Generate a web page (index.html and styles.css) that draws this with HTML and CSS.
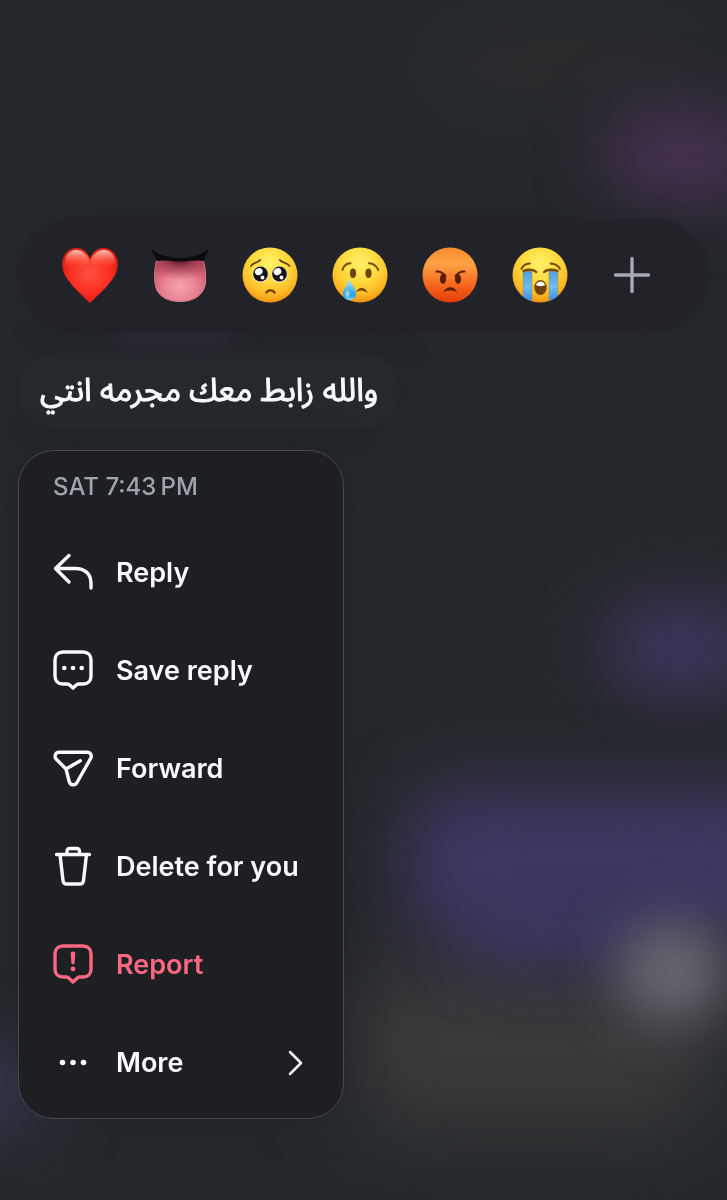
FILE: index.html
```html
<!DOCTYPE html>
<html lang="en">
<head>
<meta charset="UTF-8">
<meta name="viewport" content="width=device-width, initial-scale=1.0">
<title>Message options</title>
<link rel="stylesheet" href="styles.css">
</head>
<body>

<svg class="defs" width="0" height="0" aria-hidden="true">
  <defs>
    <radialGradient id="face" cx="50%" cy="30%" r="72%">
      <stop offset="0" stop-color="#fff26a"/>
      <stop offset="0.45" stop-color="#ffdb3e"/>
      <stop offset="0.8" stop-color="#fdb524"/>
      <stop offset="1" stop-color="#ea8c0e"/>
    </radialGradient>
    <linearGradient id="angry" x1="0" y1="0" x2="0" y2="1">
      <stop offset="0" stop-color="#f98a2c"/>
      <stop offset="0.3" stop-color="#fda245"/>
      <stop offset="0.65" stop-color="#f66c20"/>
      <stop offset="1" stop-color="#e43c08"/>
    </linearGradient>
    <radialGradient id="heart" cx="50%" cy="45%" r="60%">
      <stop offset="0" stop-color="#ff5340"/>
      <stop offset="0.6" stop-color="#fb2f22"/>
      <stop offset="1" stop-color="#d8150f"/>
    </radialGradient>
    <linearGradient id="shine" x1="0" y1="0" x2="0" y2="1">
      <stop offset="0" stop-color="#ffc4b4"/>
      <stop offset="1" stop-color="#ff5a45" stop-opacity="0"/>
    </linearGradient>
    <radialGradient id="tongue" cx="50%" cy="66%" r="62%">
      <stop offset="0" stop-color="#f5a3b0"/>
      <stop offset="0.5" stop-color="#ea8597"/>
      <stop offset="0.85" stop-color="#d86278"/>
      <stop offset="1" stop-color="#c4586c"/>
    </radialGradient>
    <radialGradient id="tongueShade" cx="50%" cy="0%" r="75%" fx="50%" fy="0%">
      <stop offset="0" stop-color="#571626"/>
      <stop offset="0.45" stop-color="#8a2c42" stop-opacity="0.6"/>
      <stop offset="1" stop-color="#a33a50" stop-opacity="0"/>
    </radialGradient>
    <linearGradient id="drop" x1="0" y1="0" x2="0" y2="1">
      <stop offset="0" stop-color="#bfeaff"/>
      <stop offset="0.5" stop-color="#4fb9ee"/>
      <stop offset="0.8" stop-color="#2aa0e6"/>
      <stop offset="1" stop-color="#7fdcff"/>
    </linearGradient>
    <linearGradient id="stream" x1="0" y1="0" x2="0" y2="1">
      <stop offset="0" stop-color="#4a9fe0"/>
      <stop offset="0.5" stop-color="#6fbdf2"/>
      <stop offset="1" stop-color="#2387e8"/>
    </linearGradient>
    <clipPath id="faceClip"><circle cx="30" cy="30" r="27.5"/></clipPath>
  </defs>
</svg>

<div class="backdrop" aria-hidden="true">
  <div class="blob haze"></div>
  <div class="blob plum"></div>
  <div class="blob violet"></div>
  <div class="blob ash"></div>
  <div class="blob indigo"></div>
  <div class="blob indigo-low"></div>
  <div class="blob light"></div>
  <div class="blob slate"></div>
  <div class="blob trace"></div>
</div>

<main class="overlay">
  <div class="reactions">
    <button type="button" aria-label="Heart">
      <svg class="emoji" viewBox="0 0 60 60">
        <path fill="url(#heart)" d="M30 58.500C27 54 6 38 3 25C0 12 7 3 16.500 3C23 3 28 8 30 14C32 8 37 3 43.500 3C53 3 60 12 57 25C54 38 33 54 30 58.500z"/>
        <path fill="url(#shine)" d="M5 20C4 10 10 5 16.500 5C22 5 27 9 29.500 17C24 22 12 25 5 20z"/>
        <path fill="url(#shine)" d="M55 20C56 10 50 5 43.500 5C38 5 33 9 30.500 17C36 22 48 25 55 20z"/>
      </svg>
    </button>
    <button type="button" aria-label="Tongue">
      <svg class="emoji" viewBox="0 0 60 60">
        <path fill="url(#tongue)" stroke="#d9808e" stroke-width="1" d="M7 14C5 21 4 29 5 38C6 50 16 56.500 30 56.500S54 50 55.500 38C56 29 55 21 53 14z"/>
        <path fill="url(#tongueShade)" d="M7 14C6 18 5 23 5 28L30 42L55 28C55 23 54 18 53 14z"/>
        <path fill="#0d0b0d" d="M1 3.500C9 10.500 19 13 30 13S51 10.500 59 3.500C58 8 55 11 54 16C46 14.500 38 16.500 30 16.500S14 14.500 6.500 16C5.500 11 2 8 1 3.500z"/>
      </svg>
    </button>
    <button type="button" aria-label="Pleading face">
      <svg class="emoji" viewBox="0 0 60 60">
        <circle cx="30" cy="30" r="27.500" fill="url(#face)"/>
        <circle cx="20.500" cy="29.500" r="8.200" fill="#f4e6c8"/>
        <circle cx="39.500" cy="29.500" r="8.200" fill="#f4e6c8"/>
        <circle cx="20.500" cy="29" r="7.400" fill="#17141a"/>
        <circle cx="39.500" cy="29" r="7.400" fill="#17141a"/>
        <g fill="#fff">
          <ellipse cx="18.800" cy="26.600" rx="4" ry="3.400" transform="rotate(-25 18.800 26.600)"/>
          <ellipse cx="37.500" cy="26.600" rx="4" ry="3.400" transform="rotate(-25 37.500 26.600)"/>
          <circle cx="22.500" cy="32.500" r="1.900"/>
          <circle cx="41.500" cy="32.500" r="1.900"/>
        </g>
        <g fill="none" stroke="#6e3f08" stroke-width="1.700" stroke-linecap="round">
          <path d="M11 21C13 17.500 16.500 18.500 20.300 15"/>
          <path d="M39.700 15C43.500 18.500 47 17.500 49.500 21"/>
          <path stroke-width="2.400" d="M26.500 47.500C28 44.700 33 44.700 34.500 47.500"/>
        </g>
      </svg>
    </button>
    <button type="button" aria-label="Crying face">
      <svg class="emoji" viewBox="0 0 60 60">
        <circle cx="30" cy="30" r="27.500" fill="url(#face)"/>
        <ellipse cx="23" cy="28.300" rx="3.100" ry="4.700" fill="#70430c"/>
        <ellipse cx="38.500" cy="28.300" rx="3.100" ry="4.700" fill="#70430c"/>
        <g fill="none" stroke="#7d4b0c" stroke-width="1.900" stroke-linecap="round">
          <path d="M12.500 25C13.500 21 16.500 18.500 20.500 18.300"/>
          <path d="M39 18.300C43 18.500 46.500 21 48.300 25"/>
        </g>
        <path fill="#70430c" d="M25.500 47.500C28 41.500 35.500 41 37.700 48.200C34 44.800 29.500 44.500 25.500 47.500z"/>
        <path fill="url(#drop)" d="M19.300 34C17.500 40 13 44 13 48.700C13 52.500 16 55 19.500 55S26 52.500 26 48.700C26 44 21.500 40 19.300 34z"/>
        <ellipse cx="17.500" cy="49" rx="2" ry="3" fill="#c9f1ff" opacity="0.600"/>
      </svg>
    </button>
    <button type="button" aria-label="Angry face">
      <svg class="emoji" viewBox="0 0 60 60">
        <circle cx="30" cy="30" r="27.500" fill="url(#angry)"/>
        <ellipse cx="23" cy="34" rx="3" ry="4.700" fill="#5a1c05"/>
        <ellipse cx="38" cy="34" rx="3" ry="4.700" fill="#5a1c05"/>
        <g fill="none" stroke="#5a1c05" stroke-width="2" stroke-linecap="round">
          <path d="M16.500 26.500C20 26 23 28 25.500 31"/>
          <path d="M44.500 26.500C41 26 38 28 35.500 31"/>
        </g>
        <path fill="#5a1c05" d="M23.500 47.500C25.500 40.500 35 40.500 37 47.500C33 44.500 27.500 44.500 23.500 47.500z"/>
      </svg>
    </button>
    <button type="button" aria-label="Loudly crying face">
      <svg class="emoji" viewBox="0 0 60 60">
        <circle cx="30" cy="30" r="27.500" fill="url(#face)"/>
        <g clip-path="url(#faceClip)" fill="url(#stream)" stroke="#c98a1c" stroke-width="0.600">
          <rect x="13" y="26" width="9" height="32"/>
          <rect x="39" y="26" width="9" height="32"/>
        </g>
        <g fill="none" stroke="#7b4a0a" stroke-linecap="round">
          <path stroke-width="1.900" d="M11.500 24C12.500 21 16 18.800 20 18.500"/>
          <path stroke-width="1.900" d="M40.500 18.500C44.500 18.800 48.500 21 50 24"/>
          <path stroke-width="2.400" d="M13.500 26C17 24.300 23.500 24 26.300 27"/>
          <path stroke-width="2.400" d="M34.300 27C37 24 44 24.300 47.500 26"/>
        </g>
        <ellipse cx="30.500" cy="42.500" rx="6.200" ry="7.600" fill="#70410a"/>
        <path fill="#fff" d="M26 40C27 35.200 34 35.200 35 40C34 41.500 27 41.500 26 40z"/>
      </svg>
    </button>
    <button type="button" aria-label="Add reaction">
      <svg class="emoji" viewBox="0 0 60 60" fill="none" stroke="#a6a9b4" stroke-width="3.400" stroke-linecap="round">
        <path d="M15.500 30H48.500M32 13.500V46.500"/>
      </svg>
    </button>
  </div>

  <p class="bubble" lang="ar" dir="rtl">والله زابط معك مجرمه انتي</p>

  <div class="menu">
    <div class="menu-time">SAT 7:43&#8239;PM</div>
    <button type="button" class="menu-item">
      <svg class="icon" viewBox="0 0 40 40">
        <path d="M16 3.500L2.500 16.500L16 30M2.500 16.500H22C32 16.500 38 22 38 31V36"/>
      </svg>
      <span>Reply</span>
    </button>
    <button type="button" class="menu-item">
      <svg class="icon" viewBox="0 0 40 40">
        <path d="M10 2H30C35 2 38 5 38 10V26C38 31 35 34 30 34H25.500C24.500 34 24 34.300 23.300 35L20 38L16.700 35C16 34.300 15.500 34 14.500 34H10C5 34 2 31 2 26V10C2 5 5 2 10 2z"/>
        <g class="dots"><circle cx="11.300" cy="18" r="2.300"/><circle cx="20" cy="18" r="2.300"/><circle cx="28.700" cy="18" r="2.300"/></g>
      </svg>
      <span>Save reply</span>
    </button>
    <button type="button" class="menu-item">
      <svg class="icon" viewBox="0 0 40 40">
        <path d="M6 4.300H34C37.500 4.300 39.300 7.500 37.600 10.500L24 34.500C22 38 17.200 37.500 16.200 33.500L13 21L3.300 11.200C.8 8.500 2.500 4.300 6 4.300zM13 21L27.300 12.700"/>
      </svg>
      <span>Forward</span>
    </button>
    <button type="button" class="menu-item">
      <svg class="icon" viewBox="0 0 40 40">
        <path d="M3.500 8.500H36.500M7 8.500L10 34.500C10.300 37 11.500 38 13.500 38H27C29 38 30.200 37 30.500 34.500L33.500 8.500M14 8V5.500C14 3.500 15 2.500 17 2.500H23.500C25.500 2.500 26.500 3.500 26.500 5.500V8"/>
      </svg>
      <span>Delete for you</span>
    </button>
    <button type="button" class="menu-item danger">
      <svg class="icon" viewBox="0 0 40 40">
        <path d="M10 2H30C35 2 38 5 38 10V25C38 30 35 33 30 33H26.500C25.500 33 25 33.300 24.300 34L20 38L15.700 34C15 33.300 14.500 33 13.500 33H10C5 33 2 30 2 25V10C2 5 5 2 10 2z"/>
        <path class="mark" d="M17.700 9.500C17.700 6.800 22.300 6.800 22.300 9.500L21.600 19C21.500 20.700 18.500 20.700 18.400 19z"/>
        <g class="dots"><circle cx="20" cy="25" r="2.400"/></g>
      </svg>
      <span>Report</span>
    </button>
    <button type="button" class="menu-item">
      <svg class="icon" viewBox="0 0 40 40">
        <g class="dots"><circle cx="9.500" cy="20.500" r="2.800"/><circle cx="20" cy="20.500" r="2.800"/><circle cx="30.500" cy="20.500" r="2.800"/></g>
      </svg>
      <span>More</span>
      <svg class="chevron" viewBox="0 0 16 26"><path d="M3 3L14 14L3 25"/></svg>
    </button>
  </div>
</main>

</body>
</html>
```
FILE: styles.css
```css
* {
  box-sizing: border-box;
}
body {
  margin: 0;
  min-height: 100vh;
  font-family: Inter, "Liberation Sans", sans-serif;
  color: #f8f9fc;
  background-color: #25282b;
}
button {
  padding: 0;
  border: none;
  background: none;
  color: inherit;
  font: inherit;
  cursor: pointer;
}
.defs {
  position: absolute;
}

/* blurred chat behind the overlay */
.backdrop {
  position: fixed;
  inset: 0;
  z-index: -1;
  overflow: hidden;
}
.blob {
  position: absolute;
  border-radius: 50px;
  filter: blur(32px);
}
.haze {
  left: 60%;
  top: 3%;
  width: 35%;
  height: 5%;
  background-color: #2b2c2e;
}
.plum {
  left: 83%;
  top: 9%;
  width: 22%;
  height: 8%;
  background-color: #443050;
}
.violet {
  left: 83%;
  top: 50%;
  width: 22%;
  height: 8%;
  background-color: #3b345a;
}
.ash {
  left: 48%;
  top: 80%;
  width: 50%;
  height: 14%;
  background-color: #393a3b;
  filter: blur(44px);
}
.indigo {
  left: 56%;
  top: 66%;
  width: 54%;
  height: 12%;
  background-color: #3f3866;
  filter: blur(36px);
}
.indigo-low {
  left: 64%;
  top: 73%;
  width: 28%;
  height: 7%;
  background-color: #3b3660;
}
.light {
  left: 85%;
  top: 77%;
  width: 15%;
  height: 8%;
  background-color: #6c6c74;
  filter: blur(28px);
}
.slate {
  left: -8%;
  top: 87%;
  width: 16%;
  height: 7%;
  background-color: #35394f;
}
.trace {
  left: 16%;
  top: 27%;
  width: 16%;
  height: 2%;
  background-color: #322c3c;
  filter: blur(12px);
}

.overlay {
  display: flex;
  flex-direction: column;
  align-items: flex-start;
  gap: 21px;
  padding: 218px 18px 80px;
}
.reactions {
  display: grid;
  grid-template-columns: repeat(7, 1fr);
  width: 100%;
  padding: 27px 34px 27px 27px;
  border-radius: 57px;
  background-color: #222328;
  box-shadow: 0 0 40px rgba(32, 33, 38, 0.4);
}
.reactions button {
  display: flex;
  justify-content: center;
}
.emoji {
  width: 60px;
  height: 60px;
}
.bubble {
  margin: 0;
  padding: 0 22px;
  border-radius: 38px;
  background-color: #25292d;
  box-shadow: 0 0 32px rgba(32, 33, 36, 0.5);
  font-family: "Noto Sans Arabic", "DejaVu Sans", sans-serif;
  font-size: 32px;
  line-height: 76px;
  -webkit-text-stroke: 1px currentColor;
}
.menu {
  display: flex;
  flex-direction: column;
  width: 326px;
  padding-bottom: 7px;
  border: 1px solid #46484d;
  border-radius: 36px;
  background-color: #1e1f22;
  box-shadow: 0 0 40px rgba(30, 31, 34, 0.4);
}
.menu-time {
  padding: 0 34px;
  color: #a0a4ae;
  font-size: 24px;
  font-weight: 500;
  line-height: 72px;
}
.menu-item {
  display: flex;
  align-items: center;
  gap: 23px;
  height: 98px;
  padding: 0 40px 0 34px;
  font-size: 27px;
  font-weight: 600;
  text-align: left;
}
.icon {
  width: 40px;
  height: 40px;
}
.icon path,
.chevron path {
  fill: none;
  stroke: currentColor;
  stroke-width: 3.4;
  stroke-linecap: round;
  stroke-linejoin: round;
}
.icon .dots,
.icon .mark {
  fill: currentColor;
  stroke: none;
}
.chevron {
  width: 16px;
  height: 28px;
  margin-left: auto;
}
.chevron path {
  stroke-width: 2.5;
}
.danger {
  color: #fc6781;
}
```
